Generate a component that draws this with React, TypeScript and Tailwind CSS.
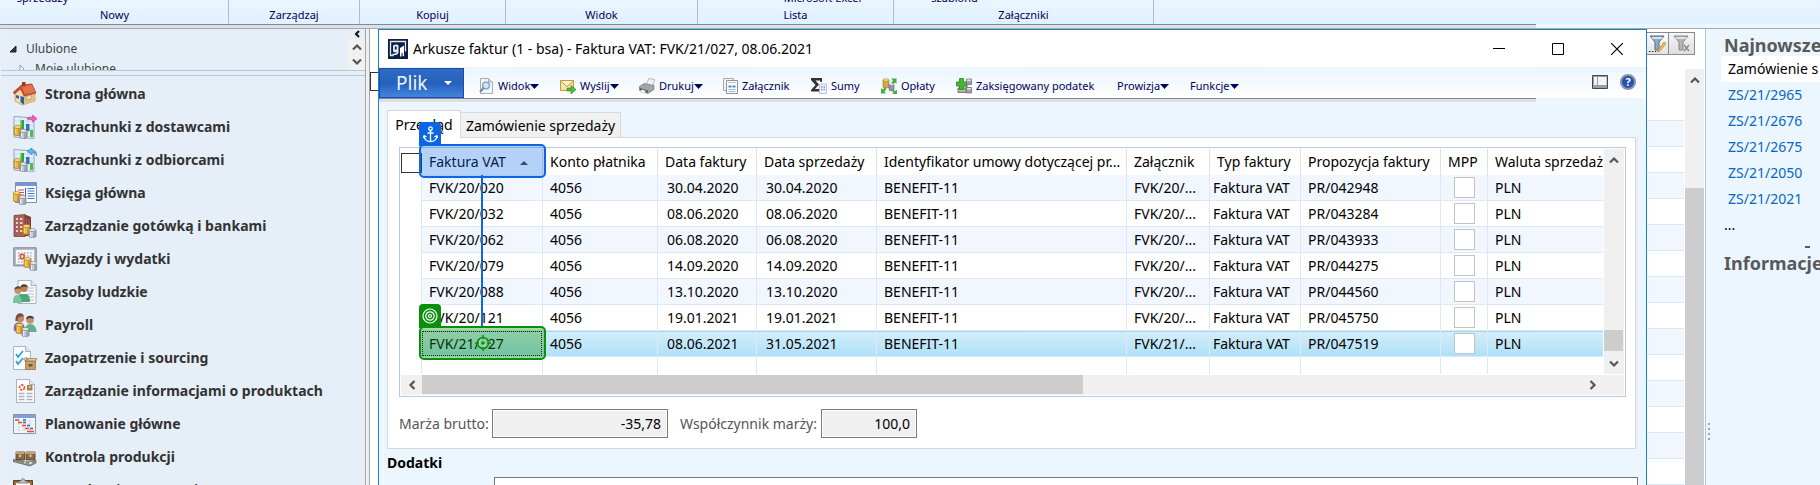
import React from 'react';

type Box = { children: React.ReactNode };

const Icon24 = ({ children }: Box) => (
  <svg width="24" height="24" viewBox="0 0 24 24" className="shrink-0" aria-hidden="true">
    {children}
  </svg>
);

const Icon16 = ({ children }: Box) => (
  <svg width="16" height="16" viewBox="0 0 16 16" className="shrink-0" aria-hidden="true">
    {children}
  </svg>
);

/* Gold and silver coin stacks used in several module icons */
const Coins = ({ x, y }: { x: number; y: number }) => (
  <g transform={`translate(${x} ${y})`}>
    <path d="M0 2v7.500c0 1.300 7 1.300 7 0V2z" fill="#d99a1e" stroke="#94670f" strokeWidth=".6" />
    <path d="M1.300 3.500v6M3 4v6" stroke="#f8d978" strokeWidth="1" />
    <ellipse cx="3.500" cy="2" rx="3.500" ry="1.500" fill="#f9dc83" stroke="#a5761a" strokeWidth=".6" />
    <path d="M6 6v6.500c0 1.300 7 1.300 7 0V6z" fill="#a3a9b5" stroke="#666c79" strokeWidth=".6" />
    <path d="M7.500 7.500v5.500M9 8v5.500" stroke="#e9ecf2" strokeWidth="1" />
    <ellipse cx="9.500" cy="6" rx="3.500" ry="1.500" fill="#e4e7ee" stroke="#767c88" strokeWidth=".6" />
  </g>
);

const ChartBase = () => (
  <>
    <path d="M1 1.500 21 3v20.500L1 22z" fill="#e6eefa" stroke="#8fa5c4" />
    <path d="M1 6h20M1 10h20M1 14h20M8 2v20M15 3v20" fill="none" stroke="#b9cbe4" strokeWidth=".7" />
    <path d="M7 5h4v9H7z" fill="#27a83a" />
    <path d="M7 5h1.500v9H7z" fill="#7ddc6d" />
    <path d="M13 9h3.500v7H13z" fill="#3a6cc0" />
    <path d="M17 15h3v7h-3z" fill="#4cc13f" />
  </>
);

const icons: Record<string, React.ReactNode> = {
  home: (
    <Icon24>
      <path d="M2 11v8l7 4 13-4v-9L11 3z" fill="#f3dcb4" stroke="#b08a58" strokeWidth=".7" />
      <path d="M11 12v11l11-4v-8z" fill="#e2bd85" />
      <path d="M0 10.500 8.500 3 19 2l4 9-12 3-3.500-7L1.500 12z" fill="#cf4f2c" stroke="#8d3018" strokeWidth=".6" />
      <path d="M8.500 4 19 3l3 7-10 2.500z" fill="#e5744c" />
      <path d="M9 0h3.500v4.500H9z" fill="#a23a20" />
      <path d="M7.500 14 11 15v7.500l-3.500-2z" fill="#2d5f9d" />
      <path d="M3 13l3 .8v3L3 16z" fill="#4a617e" />
      <path d="M14 14.500l4-1v3l-4 1z" fill="#fbf3de" stroke="#a6814e" strokeWidth=".5" />
    </Icon24>
  ),
  vendors: (
    <Icon24>
      <ChartBase />
      <path d="M14 4c1-2.500 4-2 5.500-1.500V0l4.500 3.800-4.500 3.400V5c-2-.5-4-.5-5.500-1z" fill="#f05fc4" stroke="#b93792" strokeWidth=".6" />
      <Coins x={1} y={10} />
    </Icon24>
  ),
  customers: (
    <Icon24>
      <ChartBase />
      <path d="M23.500 8c-.5-2.500-2-3.500-4.500-3.500v2.300L14 3.300 19 0v2c3 0 5 2 4.500 6z" fill="#5bb5ee" stroke="#2378b8" strokeWidth=".6" />
      <Coins x={1} y={10} />
    </Icon24>
  ),
  ledger: (
    <Icon24>
      <path d="M2.500 1.500h21v20h-21z" fill="#fbfcff" stroke="#8692ab" />
      <path d="M3 2h20v3H3z" fill="#7296d8" />
      <path d="M12.500 7v13" stroke="#485b85" />
      <path d="M5 9h6M5 11.500h6M5 14h6" stroke="#d24a58" />
      <path d="M14.500 7.500h7M14.500 10h7M14.500 12.500h7M14.500 15h7M14.500 17.500h7" stroke="#3c7ac6" />
      <Coins x={0} y={10} />
    </Icon24>
  ),
  bank: (
    <Icon24>
      <path d="M1 1.500 12 .5v22H1z" fill="#a96056" stroke="#74362f" strokeWidth=".7" />
      <path d="M12 .5 18 3v18l-6 1.500z" fill="#7f3d36" />
      <path d="M3 4h2v2H3zM7 4h2.500v2H7zM3 8h2v2H3zM7 8h2.500v2H7zM3 12h2v2H3zM7 12h2.500v2H7zM3 16h2v2H3zM7 16h2.500v2H7z" fill="#f0cfc4" />
      <path d="M13.500 4v14M16 5v13" stroke="#b97468" strokeWidth=".8" />
      <Coins x={10} y={10} />
    </Icon24>
  ),
  travel: (
    <Icon24>
      <path d="M.8.800h22.400v18H.8z" fill="#b7bac0" stroke="#7e828a" />
      <path d="M3 3h18v14H3z" fill="#f6f8fc" />
      <path d="M5 6h15M5 9h15M5 12h15M5 15h15" stroke="#7886a6" strokeDasharray="1.500 1.500" />
      <path d="M7.500 7.500h3.500v4H7.500z" fill="#fff" stroke="#e0502a" strokeWidth="1.600" />
      <Coins x={11} y={10} />
    </Icon24>
  ),
  people: (
    <Icon24>
      <path d="M5 .5h13l5 5v18H5z" fill="#fdfdff" stroke="#9aa2b0" strokeWidth=".8" />
      <path d="M18 .5v5h5" fill="#dfe4ec" stroke="#9aa2b0" strokeWidth=".8" />
      <path d="M14 8h7M14 11h7M14 14h7M14 17h7M14 20h7" stroke="#b3bac8" />
      <path d="M5 22c-.5-5 0-8 3-8h5c3 0 4 4 4 8z" fill="#4ba67c" />
      <path d="M0 23c0-5 1-8 4-8s5 3 5 8z" fill="#77c39d" />
      <circle cx="5" cy="10.500" r="3.500" fill="#c99164" /><path d="M1.300 10c-.3-5 7.600-5 7.600-.5-2-1.500-5-1.500-7.600.5z" fill="#5f4634" />
      <circle cx="11" cy="8.500" r="3.500" fill="#b57f57" /><path d="M7.300 8c-.3-5 7.600-5 7.600-.5-2-1.500-5-1.500-7.600.5z" fill="#4b3a30" />
    </Icon24>
  ),
  payroll: (
    <Icon24>
      <path d="M1 18c-1-6 1-8.500 5-8.500s6 2.500 6 8.500z" fill="#8b6aa8" />
      <path d="M12 19c0-5 1-8 5-8s6.500 3 6.500 8z" fill="#5db389" />
      <circle cx="7" cy="5.500" r="4" fill="#bf8c68" /><path d="M2.500 8C1.500-2 12-1 10.500 4c-3-1-6-.5-6 4z" fill="#7a4c3a" />
      <circle cx="17" cy="7" r="3.800" fill="#c09168" /><path d="M13 6.500c-.3-5 8-5 8-.5-2-1.500-5-1.500-8 .5z" fill="#4f4238" />
      <Coins x={3} y={10} />
    </Icon24>
  ),
  sourcing: (
    <Icon24>
      <path d="M.5.500h12l5 5v18H.5z" fill="#fdfdff" stroke="#9aa2b0" strokeWidth=".8" />
      <path d="M12.500.500v5h5" fill="#dfe4ec" stroke="#9aa2b0" strokeWidth=".8" />
      <path d="M3 8l2 3 5-6M3 15l2 3 5-6" fill="none" stroke="#2aa3cf" strokeWidth="1.700" />
      <path d="M12.500 15h10v8.500h-10z" fill="#c7a06c" stroke="#8a6a3e" strokeWidth=".7" />
      <path d="M12.500 15l2-2.500h9.500L22.500 15zM12.500 15l-2-1.500 2-2 3 1z" fill="#e3c597" stroke="#8a6a3e" strokeWidth=".6" />
      <path d="M15.500 18h4v2.500h-4z" fill="#6e5738" />
    </Icon24>
  ),
  product: (
    <Icon24>
      <path d="M3.500.500h13l5 5v18h-18z" fill="#fdfdff" stroke="#9aa2b0" strokeWidth=".8" />
      <path d="M16.500.500v5h5" fill="#dfe4ec" stroke="#9aa2b0" strokeWidth=".8" />
      <circle cx="9" cy="8.500" r="2.500" fill="#fff" stroke="#e5633a" strokeWidth="1.800" strokeDasharray="2.500 1" />
      <path d="M14 6h5.500v5.500H14z" fill="#a98155" /><path d="M16 7h1.500v2H16z" fill="#eedcb8" />
      <path d="M5.500 14.500h6M13.500 14.500h6M5.500 17.500h6M13.500 17.500h6M5.500 20.500h6M13.500 20.500h6" stroke="#aab1c1" strokeWidth="1.300" />
    </Icon24>
  ),
  planning: (
    <Icon24>
      <path d="M.5 2.500h22v19H.5z" fill="#fbfcff" stroke="#8a96ae" />
      <path d="M1 3h21v3H1z" fill="#7fa0dc" />
      <path d="M1 9h21M1 12h21M1 15h21M1 18h21M6 6v15M11 6v15M17 6v15" stroke="#c9d1e0" strokeWidth=".7" />
      <path d="M2 8h4M5 10.500h4M9 13.500h4M12 16.500h4M14 19.500h7" stroke="#ee4a22" strokeWidth="1.600" />
      <path d="M10 10.500h3M14 13.500h3M10 8h3M17 16.500h3" stroke="#3e66c8" strokeWidth="1.600" />
    </Icon24>
  ),
  production: (
    <Icon24>
      <path d="M3 7h8.500v8H3zM13 7h9v8h-9z" fill="#8b6a49" stroke="#4d3925" strokeWidth=".8" />
      <path d="M3 7h8.500v2H3zM13 7h9v2h-9z" fill="#c7a06c" />
      <path d="M6 9.500h2V12H6zM16.500 9.500h2V12h-2z" fill="#dcc39b" />
      <path d="M0 14.500 15 17l8-1.500v2.500l-6 3L0 16.500z" fill="#8e9484" stroke="#555b4f" strokeWidth=".7" />
      <circle cx="17.500" cy="18" r="1.300" fill="#e4e7df" /><circle cx="12" cy="17.500" r="1" fill="#dfe2da" />
    </Icon24>
  ),
  inventory: (
    <Icon24>
      <path d="M.5 2.500h19v21H.5z" fill="#9a6a3c" stroke="#65421f" />
      <path d="M3 5h14v18H3z" fill="#fff" />
      <path d="M5 5c0-2 2-2 3-2 0-3 4-3 4 0 1 0 3 0 3 2z" fill="#c2c6cc" stroke="#666c74" strokeWidth=".8" />
      <path d="M8 13l2 2 4-6" fill="none" stroke="#d8313a" strokeWidth="1.600" />
    </Icon24>
  ),
};

const modules: [string, string][] = [
  ['home', 'Strona główna'],
  ['vendors', 'Rozrachunki z dostawcami'],
  ['customers', 'Rozrachunki z odbiorcami'],
  ['ledger', 'Księga główna'],
  ['bank', 'Zarządzanie gotówką i bankami'],
  ['travel', 'Wyjazdy i wydatki'],
  ['people', 'Zasoby ludzkie'],
  ['payroll', 'Payroll'],
  ['sourcing', 'Zaopatrzenie i sourcing'],
  ['product', 'Zarządzanie informacjami o produktach'],
  ['planning', 'Planowanie główne'],
  ['production', 'Kontrola produkcji'],
  ['inventory', 'Zarządzanie zapasami'],
];

type Dir = 'up' | 'down' | 'left' | 'right';
const chevrons: Record<Dir, string> = {
  up: 'M1 7.500 5 3.500l4 4',
  down: 'M1 2.500 5 6.500l4-4',
  left: 'M7.500 1 3.500 5l4 4',
  right: 'M2.500 1 6.500 5l-4 4',
};
const Chevron = ({ dir }: { dir: Dir }) => (
  <svg width="10" height="10" viewBox="0 0 10 10" aria-hidden="true">
    <path d={chevrons[dir]} fill="none" stroke="#555" strokeWidth="2.200" />
  </svg>
);

const Caret = () => (
  <svg width="9" height="5" viewBox="0 0 9 5" className="shrink-0" aria-hidden="true">
    <path d="M0 0h9L4.500 5z" fill="#00005a" />
  </svg>
);

function Ribbon() {
  const label = 'flex shrink-0 flex-col items-center justify-end border-r border-[#b3bcc8] pb-[1px]';
  return (
    <header className="shrink-0 bg-[#ebf6ff] text-[11px] leading-[17px] text-[#00005a]">
      <div className="flex h-[24px] overflow-hidden bg-gradient-to-b from-[#eaf5ff] to-[#e0f1ff] pl-[1px]">
        <div className={`${label} w-[228px]`}>
          <span className="mr-[144px]">sprzedaży</span>
          <span>Nowy</span>
        </div>
        <div className={`${label} w-[131px]`}>Zarządzaj</div>
        <div className={`${label} w-[146px]`}>Kopiuj</div>
        <div className={`${label} w-[192px]`}>Widok</div>
        <div className={`${label} w-[196px]`}>
          <span className="ml-[54px]">Microsoft Excel</span>
          <span>Lista</span>
        </div>
        <div className={`${label} w-[260px]`}>
          <span className="mr-[138px]">szablonu</span>
          <span>Załączniki</span>
        </div>
      </div>
      <div className="mr-[284px] h-[4px] border-t border-[#848b96] bg-[#dde1e7]" />
      <div className="h-px bg-[#a6aab0]" />
    </header>
  );
}

function Sidebar() {
  return (
    <nav className="ml-[1px] flex w-[365px] shrink-0 flex-col overflow-hidden border-r border-[#a2a6ab] bg-[#e6eef8]">
      <div className="flex h-[42px] shrink-0 overflow-hidden border-b border-[#b4c8de] text-[12px] text-[#444]">
        <div className="flex-1 pt-[10px]">
          <div className="flex h-5 items-center pl-2">
            <svg width="8" height="8" viewBox="0 0 8 8" aria-hidden="true"><path d="M7 1v6H1z" fill="#333" stroke="#222" /></svg>
            <span className="pl-[9px]">Ulubione</span>
          </div>
          <div className="flex h-5 items-center pl-[18px]">
            <svg width="7" height="10" viewBox="0 0 7 10" aria-hidden="true"><path d="M1 1l4 4-4 4z" fill="#fff" stroke="#999" /></svg>
            <span className="pl-[9px]">Moje ulubione</span>
          </div>
        </div>
        <div className="flex w-[17px] flex-col">
          <button aria-label="Zwiń" className="flex h-[10px] w-full items-center justify-center">
            <svg width="6" height="8" viewBox="0 0 6 8" aria-hidden="true"><path d="M5 1 2 4l3 3" fill="none" stroke="#111" strokeWidth="2" /></svg>
          </button>
          <div className="flex flex-1 flex-col items-center justify-around bg-[#f1f1f1]">
            <Chevron dir="up" />
            <Chevron dir="down" />
          </div>
        </div>
      </div>
      <div className="mb-px h-[5px] shrink-0 border-b border-[#b4c8de]" />
      <ul className="shrink-0">
        {modules.map(([icon, name]) => (
          <li key={name}>
            <a href="#" className="flex h-[33px] items-center gap-[8px] pl-[12px] text-[14px] font-bold text-[#333]">
              {icons[icon]}
              {name}
            </a>
          </li>
        ))}
      </ul>
    </nav>
  );
}

const tools: { name: string; width: string; menu?: boolean; icon?: React.ReactNode }[] = [
  {
    name: 'Widok', width: 'w-[82px]', menu: true,
    icon: (
      <Icon16>
        <path d="M2.500.500h8l4 3.500v11.500h-12z" fill="#f2f4f7" stroke="#a9adb4" />
        <path d="M10.500.500V4h4" fill="#cfd4db" stroke="#a9adb4" />
        <circle cx="8" cy="7.500" r="3.300" fill="#cfe6fa" stroke="#7b9dc4" strokeWidth="1.300" />
        <path d="M5.500 10 2 14" stroke="#7c8794" strokeWidth="2" />
      </Icon16>
    ),
  },
  {
    name: 'Wyślij', width: 'w-[79px]', menu: true,
    icon: (
      <Icon16>
        <path d="M.5 2.500h13v10H.5z" fill="#fbe59a" stroke="#bd9a45" />
        <path d="M.5 3 7 8.500 13.500 3" fill="#fff5c8" stroke="#bd9a45" />
        <path d="M7 10h4V7.500l5 4-5 4.500v-3H7z" fill="#52b83a" stroke="#2e8420" strokeWidth=".6" />
      </Icon16>
    ),
  },
  {
    name: 'Drukuj', width: 'w-[83px]', menu: true,
    icon: (
      <Icon16>
        <path d="M7 7l3-6.500 6 1L13 9z" fill="#eef4fb" stroke="#9aa2ad" strokeWidth=".7" />
        <path d="M0 9l5-3.500 10 2v4L9 15.500 0 12z" fill="#a1a6ad" stroke="#666" strokeWidth=".6" />
        <path d="M1 10l8 2.500V15l-8-3z" fill="#555b63" />
        <path d="M3 11.500l4 1.500-2 2-4-1.500z" fill="#fff" stroke="#999" strokeWidth=".4" />
      </Icon16>
    ),
  },
  {
    name: 'Załącznik', width: 'w-[89px]',
    icon: (
      <Icon16>
        <path d="M1.500.500h10v12h-10z" fill="#f1f2f4" stroke="#a4a8af" />
        <path d="M4.500 2.500h11v13h-11z" fill="#fff" stroke="#8d949e" />
        <path d="M6 4.500h8" stroke="#bcc3cc" />
        <path d="M6.500 7.500h3v2h-3zM10.500 7.500h3v2h-3z" fill="#4888d0" />
        <path d="M6.500 11.500h7M6.500 13.500h7" stroke="#9db9de" />
      </Icon16>
    ),
  },
  {
    name: 'Sumy', width: 'w-[70px]',
    icon: (
      <Icon16>
        <path d="M0 0h11v4H9.500L9 2.500H4.500L8 6.500 4 11h6v2.500H0V12l4.500-5L0 2z" fill="#2f343a" />
        <path d="M8.500 6h7v9.500h-7z" fill="#f0f3f8" stroke="#b0b6c0" strokeWidth=".8" />
        <path d="M10 9h1.500M12.500 9h1.500M10 11.500h1.500M12.500 11.500h1.500" stroke="#6f9fdc" strokeWidth="1.500" />
      </Icon16>
    ),
  },
  {
    name: 'Opłaty', width: 'w-[75px]',
    icon: (
      <Icon16>
        <path d="M2 2v7c0 1.200 6 1.200 6 0V2z" fill="#d9a647" stroke="#9a7328" strokeWidth=".6" />
        <ellipse cx="5" cy="2" rx="3" ry="1.300" fill="#f6dd9e" stroke="#9a7328" strokeWidth=".5" />
        <path d="M8 6v6c0 1.200 5 1.200 5 0V6z" fill="#9299a8" stroke="#5f6675" strokeWidth=".6" />
        <ellipse cx="10.500" cy="6" rx="2.500" ry="1.200" fill="#d5dae4" />
        <path d="M10 .5h5.500V6L14 4.500l-2 1.500-1.500-1.500L12 2.500zM0 15.500V10l1.500 1.500L4 9.500l1.500 1.500-2 2.500L5 15.500zM16 16h-5l1.500-1.500-1.500-2 1-1 2 1.500L16 11.500z" fill="#43b135" />
      </Icon16>
    ),
  },
  {
    name: 'Zaksięgowany podatek', width: 'w-[161px]',
    icon: (
      <Icon16>
        <path d="M2 10v4.500h8V10zM8 7h3v6" fill="#b9b59f" stroke="#777" />
        <path d="M3.500 .5h4V4h3v4h-3v3.500h-4V8h-3V4h3z" fill="#45b72e" stroke="#268a18" strokeWidth=".8" />
        <path d="M10.500 1h5v5.500h-5zM10.500 9.500h5V15h-5z" fill="#9ba0a8" stroke="#6d727b" strokeWidth=".8" />
        <path d="M11 1.500h4v1.500h-4zM11 10h4v1.500h-4z" fill="#e1e4e9" />
      </Icon16>
    ),
  },
  { name: 'Prowizja', width: 'w-[73px]', menu: true },
  { name: 'Funkcje', width: 'w-[60px]', menu: true },
];

function TitleBar() {
  return (
    <div className="flex h-[37px] shrink-0 items-center bg-white pl-[9px]">
      <svg width="20" height="20" viewBox="0 0 20 20" aria-hidden="true">
        <path d="M0 0h20v20H0z" fill="#0b1f45" />
        <path d="M2.500 2.500h15v10M2.500 2v14.500h3" fill="none" stroke="#e6ecf5" strokeWidth="1.300" />
        <path d="M5 6.500C7 5 10 5 10.500 6.500V14c-1 2-4 2.500-6 2v-1.500c2 .5 4 0 4.500-1.500-2 1-4 .5-4-1.500z" fill="#e6ecf5" />
        <path d="M6.800 7.500h1.800v3H6.800z" fill="#0b1f45" />
        <path d="M12 17.500V9l4-2.500v11l-1.500-1v-3l-1 .8v3.200z" fill="#fff" />
      </svg>
      <h1 className="flex-1 truncate pl-[5px] text-[14px]">Arkusze faktur (1 - bsa) - Faktura VAT: FVK/21/027, 08.06.2021</h1>
      <button aria-label="Minimalizuj" className="flex h-full w-[58px] items-center justify-center">
        <svg width="12" height="12" viewBox="0 0 12 12"><path d="M0 5.500h12" stroke="#000" /></svg>
      </button>
      <button aria-label="Maksymalizuj" className="flex h-full w-[59px] items-center justify-center">
        <svg width="12" height="12" viewBox="0 0 12 12"><path d="M.5.500h11v11H.5z" fill="none" stroke="#000" /></svg>
      </button>
      <button aria-label="Zamknij" className="flex h-full w-[59px] items-center justify-center">
        <svg width="12" height="12" viewBox="0 0 12 12"><path d="M0 0l12 12M12 0 0 12" stroke="#000" strokeWidth="1.200" /></svg>
      </button>
    </div>
  );
}

function Toolbar() {
  return (
    <div className="shrink-0">
      <div className="flex h-[31px] items-end bg-gradient-to-b from-[#e9f5ff] to-white">
        <button className="flex h-[30px] w-[85px] shrink-0 items-center justify-between border border-[#1c4ba0] bg-gradient-to-b from-[#2f6cc8] via-[#2660ba] to-[#4286e0] pr-[11px] pl-[16px] text-[19px] text-[#eaf3ff]">
          Plik
          <svg width="8" height="4" viewBox="0 0 8 4" aria-hidden="true"><path d="M0 0h8L4 4z" fill="#fff" /></svg>
        </button>
        <div className="flex h-[24px] flex-1 pl-[14px] text-[11px] text-[#00005a]">
          {tools.map((t) => (
            <div key={t.name} className={`${t.width} shrink-0`}>
              <button className="flex h-full items-center whitespace-nowrap">
                {t.icon}
                <span className={t.icon ? 'pl-[4px]' : ''}>{t.name}</span>
                {t.menu && <Caret />}
              </button>
            </div>
          ))}
        </div>
        <div className="flex h-[26px] items-start gap-[12px] bg-gradient-to-b from-[#f1f8ff] to-white pt-[2px] pr-[10px]">
          <button aria-label="Układ" className="pt-[1px]">
            <svg width="16" height="14" viewBox="0 0 16 14"><path d="M.5.500h15v13H.5z" fill="#9a9fa6" stroke="#44494f" /><path d="M2 2h3v8H2zM6 2h8.500v8H6z" fill="#f4f4f6" /></svg>
          </button>
          <button aria-label="Pomoc" className="flex h-4 w-4 items-center justify-center rounded-full border-2 border-[#8e939c] bg-[#2450b4] text-[11px] font-bold text-white">?</button>
        </div>
      </div>
      <div className="mr-[110px] h-[4px] border-t border-[#848b96] bg-[#dbe0e7]" />
    </div>
  );
}

const columns: { name: string; width: string; head: string; body: string }[] = [
  { name: 'Faktura VAT', width: 'w-[121px]', head: 'pl-[7px]', body: 'pl-[7px]' },
  { name: 'Konto płatnika', width: 'w-[115px]', head: 'pl-[7px]', body: 'pl-[7px]' },
  { name: 'Data faktury', width: 'w-[99px]', head: 'pl-[7px]', body: 'pl-[9px]' },
  { name: 'Data sprzedaży', width: 'w-[120px]', head: 'pl-[7px]', body: 'pl-[9px]' },
  { name: 'Identyfikator umowy dotyczącej pr...', width: 'w-[250px]', head: 'pl-[7px]', body: 'pl-[7px]' },
  { name: 'Załącznik', width: 'w-[83px]', head: 'pl-[7px]', body: 'pl-[7px]' },
  { name: 'Typ faktury', width: 'w-[91px]', head: 'pl-[7px]', body: 'pl-[3px]' },
  { name: 'Propozycja faktury', width: 'w-[140px]', head: 'pl-[7px]', body: 'pl-[7px]' },
  { name: 'MPP', width: 'w-[47px]', head: 'pl-[7px]', body: 'pl-[13px]' },
  { name: 'Waluta sprzedaży', width: '', head: 'pl-[7px]', body: 'pl-[7px]' },
];

const rows: string[][] = [
  ['FVK/20/020', '4056', '30.04.2020', '30.04.2020', 'BENEFIT-11', 'FVK/20/...', 'Faktura VAT', 'PR/042948'],
  ['FVK/20/032', '4056', '08.06.2020', '08.06.2020', 'BENEFIT-11', 'FVK/20/...', 'Faktura VAT', 'PR/043284'],
  ['FVK/20/062', '4056', '06.08.2020', '06.08.2020', 'BENEFIT-11', 'FVK/20/...', 'Faktura VAT', 'PR/043933'],
  ['FVK/20/079', '4056', '14.09.2020', '14.09.2020', 'BENEFIT-11', 'FVK/20/...', 'Faktura VAT', 'PR/044275'],
  ['FVK/20/088', '4056', '13.10.2020', '13.10.2020', 'BENEFIT-11', 'FVK/20/...', 'Faktura VAT', 'PR/044560'],
  ['FVK/20/121', '4056', '19.01.2021', '19.01.2021', 'BENEFIT-11', 'FVK/20/...', 'Faktura VAT', 'PR/045750'],
  ['FVK/21/027', '4056', '08.06.2021', '31.05.2021', 'BENEFIT-11', 'FVK/21/...', 'Faktura VAT', 'PR/047519'],
];

const cell = 'h-[26px] overflow-hidden whitespace-nowrap border-b border-r border-[#dce8f5] p-0';

function rowFill(i: number) {
  if (i === rows.length - 1) return 'bg-gradient-to-b from-[#d6eefa] to-[#ade0f8] shadow-[inset_0_1px_0_#96d9f5]';
  return i % 2 === 0 ? 'bg-[#f1f6ff]' : 'bg-white';
}

function Annotations() {
  return (
    <div className="pointer-events-none absolute inset-0 z-20">
      <div className="absolute top-[26px] left-[80px] h-[151px] w-[2px] bg-[#0a66e4]" />
      <div className="absolute top-[-27px] left-[18px] flex h-[24px] w-[22px] items-center justify-center rounded-t-[4px] bg-[#0a66e4]">
        <svg width="15" height="17" viewBox="0 0 15 17" fill="none" stroke="#fff" strokeWidth="1.300" aria-hidden="true">
          <circle cx="7.500" cy="2.700" r="1.800" />
          <path d="M7.500 4.500V15.500M4.500 7h6M1 10c.5 3.500 3 5.500 6.500 5.500S13.500 13.500 14 10M0 12l1.200-2.300L3.500 11M15 12l-1.200-2.300L11.500 11" />
        </svg>
      </div>
      <div className="absolute top-[-5px] left-[18px] h-[34px] w-[127px] rounded-[5px] border-2 border-[#0a66e4] bg-[#0a66e4]/30" />
      <div className="absolute top-[155px] left-[18px] flex h-[24px] w-[22px] items-center justify-center rounded-t-[4px] bg-[#0a8f0a]">
        <svg width="16" height="16" viewBox="0 0 16 16" fill="none" stroke="#fff" strokeWidth="1.200" aria-hidden="true">
          <circle cx="8" cy="8" r="7" /><circle cx="8" cy="8" r="4.200" /><circle cx="8" cy="8" r="1.500" />
        </svg>
      </div>
      <div className="absolute top-[177px] left-[18px] flex h-[34px] w-[127px] items-center justify-center rounded-[5px] border-2 border-[#0a8f0a] bg-[#0a8f0a]/35">
        <svg width="18" height="18" viewBox="0 0 18 18" fill="none" stroke="#0a8f0a" strokeWidth="1.500" aria-hidden="true">
          <circle cx="9" cy="9" r="5.500" fill="#a9dcc0" fillOpacity=".8" /><circle cx="9" cy="9" r="1.800" fill="#0a8f0a" stroke="none" />
          <path d="M9 1v4M9 13v4M1 9h4M13 9h4" />
        </svg>
      </div>
    </div>
  );
}

function Grid() {
  return (
    <div className="mr-[9px] border border-[#b9cbe0] bg-white p-px">
      <div className="flex">
        <div className="relative min-w-0 flex-1">
          <div className="overflow-hidden">
            <table className="w-full table-fixed border-separate border-spacing-0 text-left text-[14px] leading-[20px]">
              <thead>
                <tr>
                  <th className="h-[26px] w-[21px] p-0">
                    <div className="mt-px h-[20px] w-[21px] border border-[#333] bg-white" />
                  </th>
                  {columns.map((c, i) => (
                    <th key={c.name} className={`${c.width} overflow-hidden border-r border-[#dfdfdf] p-0 font-normal whitespace-nowrap last:border-r-0`}>
                      <span className={`${c.head} block`}>
                        {c.name}
                        {i === 0 && (
                          <svg width="8" height="4" viewBox="0 0 8 4" className="ml-[14px] inline-block align-middle" aria-hidden="true">
                            <path d="M0 4 4 0l4 4z" fill="#444" />
                          </svg>
                        )}
                      </span>
                    </th>
                  ))}
                </tr>
              </thead>
              <tbody>
                {rows.map((r, i) => (
                  <tr key={r[0]}>
                    <td className="border-r border-[#dce8f5] bg-white p-0" />
                    {r.map((v, j) => (
                      <td key={j} className={`${cell} ${rowFill(i)}`}>
                        {i === rows.length - 1 && j === 0 ? (
                          <span className="block h-[25px] border border-dotted border-black pl-[6px] leading-[23px]">{v}</span>
                        ) : (
                          <span className={`${columns[j].body} block`}>{v}</span>
                        )}
                      </td>
                    ))}
                    <td className={`${cell} ${rowFill(i)}`}>
                      <input type="checkbox" aria-label={`MPP ${r[0]}`} className="ml-[13px] block h-[21px] w-[21px] appearance-none border border-[#c3c3c3] bg-white" />
                    </td>
                    <td className={`${cell} border-r-0 ${rowFill(i)}`}>
                      <span className="block pl-[7px]">PLN</span>
                    </td>
                  </tr>
                ))}
                <tr>
                  {Array.from({ length: 11 }, (_, i) => (
                    <td key={i} className="h-[17px] border-r border-[#dce8f5] p-0 last:border-r-0" />
                  ))}
                </tr>
              </tbody>
            </table>
          </div>
          <Annotations />
        </div>
        <div className="ml-px flex w-[20px] flex-col bg-[#f0f0f0]">
          <button aria-label="Przewiń w górę" className="flex h-[22px] items-center justify-center"><Chevron dir="up" /></button>
          <div className="flex-1" />
          <div className="mr-px h-[21px] bg-[#cdcdcd]" />
          <button aria-label="Przewiń w dół" className="flex h-[23px] items-center justify-center pt-[2px]"><Chevron dir="down" /></button>
        </div>
      </div>
      <div className="mt-px flex h-[20px] bg-[#f0f0f0] pr-[21px]">
        <button aria-label="Przewiń w lewo" className="flex w-[21px] items-center justify-center"><Chevron dir="left" /></button>
        <div className="flex-1 pb-px">
          <div className="h-full w-[57%] bg-[#cdcdcd]" />
        </div>
        <button aria-label="Przewiń w prawo" className="flex w-[21px] items-center justify-center"><Chevron dir="right" /></button>
      </div>
    </div>
  );
}

function InvoiceWindow() {
  const field = 'h-[29px] border border-[#7a7a7a] bg-[#f0f0f0] pr-[6px] text-right text-black shadow-[inset_0_0_0_1px_#fff]';
  return (
    <main className="flex min-w-0 flex-1 flex-col overflow-hidden border border-b-0 border-[#1883c5] bg-[#ebf6ff]">
      <TitleBar />
      <Toolbar />
      <div className="shrink-0 pt-[8px] pr-[10px] pl-[8px]">
        <div className="flex items-end">
          <button className="z-10 -mb-px h-[28px] w-[74px] border border-b-0 border-[#d9d9d9] bg-white text-[14px]">Przegląd</button>
          <button className="h-[25px] w-[160px] border border-b-0 border-l-0 border-[#d9d9d9] bg-[#f0f0f0] text-[14px] whitespace-nowrap">Zamówienie sprzedaży</button>
        </div>
        <div className="border border-[#d9d9d9] bg-white pt-[9px] pb-[10px] pl-[11px] shadow-[2px_0_0_#e9eef2]">
          <Grid />
          <div className="mt-[12px] flex items-center text-[14px] text-[#555]">
            <label htmlFor="margin" className="w-[93px] whitespace-nowrap">Marża brutto:</label>
            <input id="margin" readOnly defaultValue="-35,78" className={`${field} w-[176px]`} />
            <label htmlFor="ratio" className="ml-[12px] w-[141px] whitespace-nowrap">Współczynnik marży:</label>
            <input id="ratio" readOnly defaultValue="100,0" className={`${field} w-[96px]`} />
          </div>
        </div>
      </div>
      <h2 className="shrink-0 pt-[4px] pl-[8px] text-[14px] leading-[20px] font-bold">Dodatki</h2>
      <div className="mt-[4px] mr-[8px] ml-[115px] h-[24px] shrink-0 border border-[#777] bg-white" />
    </main>
  );
}

function BackList() {
  return (
    <section className="flex w-[58px] shrink-0 flex-col overflow-hidden bg-white">
      <div className="flex h-[40px] shrink-0 pt-[3px]">
        <button aria-label="Filtr zaawansowany" className="flex h-[23px] w-[22px] items-center justify-center border border-l-0 border-[#888c92] bg-gradient-to-b from-white to-[#e2e2e2]">
          <svg width="18" height="18" viewBox="0 0 18 18">
            <path d="M1 1h14l-5 6v8H6V7z" fill="#8fadc6" stroke="#55697d" /><path d="M2.500 2h11l-1 2h-9z" fill="#d9e6f1" />
            <path d="M9 15l6-8 2 1.500-6 7.500-2.500.800z" fill="#f3bf54" stroke="#9e7424" strokeWidth=".6" /><path d="M0 16.500h7" stroke="#222" strokeDasharray="1.500 1.500" />
          </svg>
        </button>
        <button aria-label="Usuń filtr" className="flex h-[23px] w-[26px] items-center justify-center border border-l-0 border-[#888c92] bg-gradient-to-b from-[#f6f6f6] to-[#dedede]">
          <svg width="18" height="18" viewBox="0 0 18 18">
            <path d="M1 1h14l-5 6v8H6V7z" fill="#b5b5b5" stroke="#888" /><path d="M2.500 2h11l-1 2h-9z" fill="#e3e3e3" />
            <path d="M11 10l5 6M16 10l-5 6" stroke="#8a8a8a" strokeWidth="1.500" />
          </svg>
        </button>
      </div>
      <div className="flex flex-1">
        <div className="w-[37px] pt-[51px]">
          {Array.from({ length: 15 }, (_, i) => (
            <div key={i} className={`h-[26px] border-t border-[#d9e8f5] ${i % 2 === 0 ? 'bg-[#f1f6ff]' : 'bg-white'}`} />
          ))}
        </div>
        <div className="ml-[1px] flex w-[19px] flex-col bg-[#f0f0f0]">
          <button aria-label="Przewiń listę w górę" className="flex h-[22px] items-center justify-center"><Chevron dir="up" /></button>
          <div className="mt-[97px] flex-1 bg-[#cdcdcd]" />
        </div>
      </div>
    </section>
  );
}

const orders = ['ZS/21/2965', 'ZS/21/2676', 'ZS/21/2675', 'ZS/21/2050', 'ZS/21/2021'];

function InfoPane() {
  return (
    <aside className="relative w-[115px] shrink-0 overflow-hidden border-l border-[#b4c4da] bg-[#ebf6ff] pl-[15px] whitespace-nowrap">
      <h2 className="h-[27px] pt-[5px] pl-[3px] text-[18px] leading-[22px] font-bold text-[#5a5a5a]">Najnowsze</h2>
      <div className="h-[26px] bg-white pl-[7px] text-[14px] leading-[26px]">Zamówienie s</div>
      <ul>
        {orders.map((o) => (
          <li key={o}>
            <a href="#" className="block h-[26px] pl-[7px] text-[14px] leading-[26px] text-[#0a66c2]">{o}</a>
          </li>
        ))}
      </ul>
      <div className="h-[26px] pl-[3px] text-[14px] leading-[26px]">...</div>
      <div className="flex h-[10px] items-end pl-[84px]">
        <span className="block h-[2px] w-[5px] bg-[#5a5a5a]" />
      </div>
      <h2 className="pt-[4px] pl-[3px] text-[18px] leading-[22px] font-bold text-[#5a5a5a]">Informacje</h2>
      <div className="absolute top-[394px] left-[2px] flex flex-col gap-[3px]">
        {[0, 1, 2, 3].map((i) => (
          <span key={i} className="block h-[2px] w-[2px] bg-[#98a5b3]" />
        ))}
      </div>
    </aside>
  );
}

export default function App() {
  return (
    <div className="flex h-screen flex-col overflow-hidden bg-[#f0f0f0] font-['Noto_Sans','Open_Sans',sans-serif] text-black">
      <Ribbon />
      <div className="flex min-h-0 flex-1">
        <Sidebar />
        <div className="ml-[3px] w-[9px] shrink-0 border-l border-[#a2a6ab] bg-white pt-[43px]">
          <div className="h-[19px] border border-r-0 border-[#333]" />
        </div>
        <InvoiceWindow />
        <BackList />
        <InfoPane />
      </div>
    </div>
  );
}
